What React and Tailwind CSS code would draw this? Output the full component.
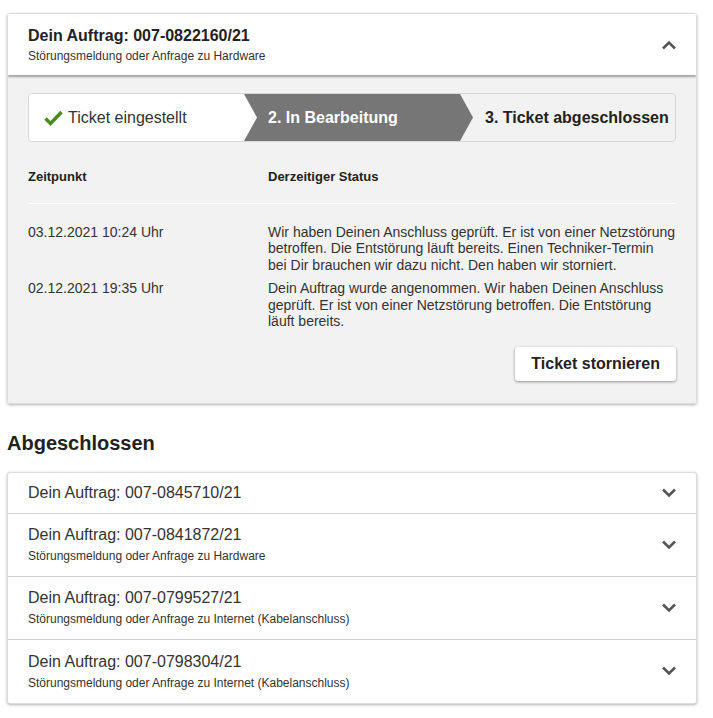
import React from 'react';

// Chevron used in the accordion headers
function Chevron({ up }) {
  return (
    <svg width="16" height="10" viewBox="0 0 16 10" className="text-[#555]">
      <path
        d={up ? 'M2 8.5 L8 2.5 L14 8.5' : 'M2 1.5 L8 7.5 L14 1.5'}
        fill="none"
        stroke="currentColor"
        strokeWidth="2.6"
      />
    </svg>
  );
}

const history = [
  {
    time: '03.12.2021 10:24 Uhr',
    text: 'Wir haben Deinen Anschluss geprüft. Er ist von einer Netzstörung betroffen. Die Entstörung läuft bereits. Einen Techniker-Termin bei Dir brauchen wir dazu nicht. Den haben wir storniert.',
  },
  {
    time: '02.12.2021 19:35 Uhr',
    text: 'Dein Auftrag wurde angenommen. Wir haben Deinen Anschluss geprüft. Er ist von einer Netzstörung betroffen. Die Entstörung läuft bereits.',
  },
];

const closed = [
  { id: '007-0845710/21', sub: null },
  { id: '007-0841872/21', sub: 'Störungsmeldung oder Anfrage zu Hardware' },
  { id: '007-0799527/21', sub: 'Störungsmeldung oder Anfrage zu Internet (Kabelanschluss)' },
  { id: '007-0798304/21', sub: 'Störungsmeldung oder Anfrage zu Internet (Kabelanschluss)' },
];

export default function App() {
  return (
    <div className="min-h-[718px] bg-white text-[#333] font-['Liberation_Sans',Arial,sans-serif] pt-[13px] pl-[7px]">
      {/* open ticket */}
      <div className="w-[690px] rounded-[3px] border border-[#dcdcdc] shadow-[0_1px_3px_rgba(0,0,0,0.3)] overflow-hidden">
        <div className="relative z-10 bg-white flex items-center justify-between pl-[20px] pr-[19px] pt-[12px] pb-[11px] shadow-[0_2px_2px_rgba(0,0,0,0.35)]">
          <div>
            <div className="text-[16px] leading-[20px] font-bold text-[#222]">Dein Auftrag: 007-0822160/21</div>
            <div className="text-[12px] leading-[16px] mt-[2px]">Störungsmeldung oder Anfrage zu Hardware</div>
          </div>
          <Chevron up />
        </div>

        <div className="bg-[#f2f2f2] px-[20px] pt-[18px] pb-[22px]">
          {/* progress steps */}
          <div className="flex h-[49px] rounded-[4px] border border-[#d6d6d6] bg-[#f2f2f2] overflow-hidden">
            <div className="relative z-10 w-[228px] bg-white flex items-center pl-[15px] [clip-path:polygon(0_0,calc(100%-13px)_0,100%_50%,calc(100%-13px)_100%,0_100%)]">
              <svg width="19" height="16" viewBox="0 0 19 16" className="mr-[5px]">
                <path d="M1.5 8.5 L6.5 13.5 L17.5 2" fill="none" stroke="#4b8b1d" strokeWidth="3.4" />
              </svg>
              <span className="text-[16px]">Ticket eingestellt</span>
            </div>
            <div className="ml-[-13px] w-[229px] bg-[#767676] flex items-center pl-[24px] [clip-path:polygon(0_0,calc(100%-13px)_0,100%_50%,calc(100%-13px)_100%,0_100%)]">
              <span className="text-[16px] font-bold text-white">2. In Bearbeitung</span>
            </div>
            <div className="flex-1 flex items-center pl-[12px]">
              <span className="text-[16px] font-bold text-[#222]">3. Ticket abgeschlossen</span>
            </div>
          </div>

          {/* status history */}
          <div className="grid grid-cols-[240px_1fr] text-[13px] font-bold text-[#222] pt-[25px] pb-[16px] border-b border-white">
            <div>Zeitpunkt</div>
            <div>Derzeitiger Status</div>
          </div>
          <div className="pt-[20px] flex flex-col gap-[7px] text-[14px] leading-[16.5px]">
            {history.map(h => (
              <div key={h.time} className="grid grid-cols-[240px_1fr]">
                <div>{h.time}</div>
                <div>{h.text}</div>
              </div>
            ))}
          </div>
          <div className="flex justify-end mt-[17px]">
            <button className="bg-white rounded-[3px] h-[34px] px-[16px] text-[16px] font-bold text-[#222] shadow-[0_1px_3px_rgba(0,0,0,0.4)]">
              Ticket stornieren
            </button>
          </div>
        </div>
      </div>

      <h2 className="text-[20px] font-bold text-[#222] mt-[27px] mb-[17px] leading-[24px]">Abgeschlossen</h2>

      {/* closed tickets */}
      <div className="w-[690px] rounded-[3px] border border-[#dcdcdc] bg-white shadow-[0_1px_3px_rgba(0,0,0,0.3)]">
        {closed.map((c, i) => (
          <div
            key={c.id}
            className={`flex items-center justify-between pl-[20px] pr-[19px] ${c.sub ? 'h-[63px]' : 'h-[41px]'} ${i < closed.length - 1 ? 'border-b border-[#cfcfcf]' : ''}`}
          >
            <div>
              <div className="text-[16px] leading-[20px]">Dein Auftrag: {c.id}</div>
              {c.sub && <div className="text-[12px] leading-[16px] mt-[3px]">{c.sub}</div>}
            </div>
            <Chevron />
          </div>
        ))}
      </div>
    </div>
  );
}
